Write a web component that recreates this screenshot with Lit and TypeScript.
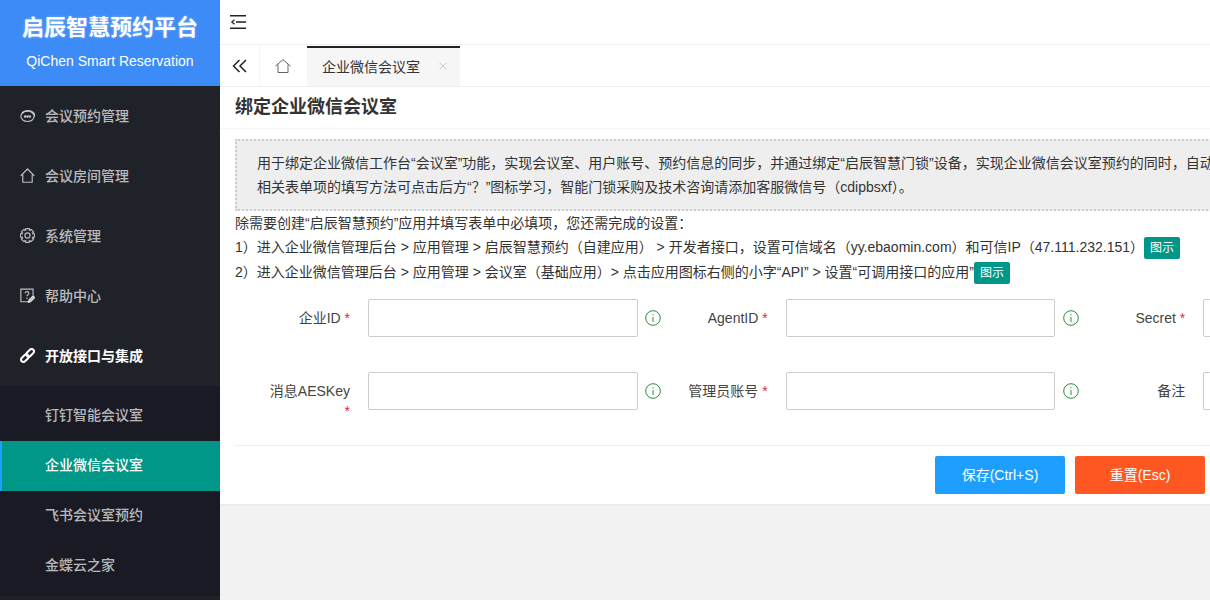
import { LitElement, html, css, svg } from "lit";
import { customElement } from "lit/decorators.js";

const gearPath = (() => {
  const c = 7;
  const pts: string[] = [];
  for (let i = 0; i < 8; i++) {
    const a = (i * Math.PI) / 4;
    for (const [r, d] of [[5.3, -0.42], [6.6, -0.24], [6.6, 0.24], [5.3, 0.42]] as const) {
      const x = c + r * Math.cos(a + d);
      const y = c + r * Math.sin(a + d);
      pts.push(`${x.toFixed(2)} ${y.toFixed(2)}`);
    }
  }
  return `M${pts.join("L")}Z`;
})();

const icons: Record<string, unknown> = {
  chat: svg`<ellipse cx="7" cy="7.8" rx="6.2" ry="4.8"/><path d="M2 4.6C4.2 1.6 11 1.4 13.4 5.4c.5 1 .4 1.8.1 2.6"/><circle cx="4.8" cy="8" r=".6" fill="currentColor"/><circle cx="7" cy="8" r=".6" fill="currentColor"/><circle cx="9.2" cy="8" r=".6" fill="currentColor"/>`,
  home: svg`<path d="M.6 7.4 7 .9l6.4 6.5M2.6 6v7.3h8.8V6"/>`,
  gear: svg`<path d=${gearPath}/><circle cx="7" cy="7" r="2.4"/>`,
  help: svg`<path d="M9 12.8H.8V1h11.4v5.8"/><path d="M4.7 4.9c.2-2.1 3.6-2.1 3.6 0 0 1.3-1.8 1.4-1.8 2.9M6.5 9.2v1"/><path d="m7.8 13.4.5-2.2 3.9-3.9 1.6 1.6-3.9 3.9z" fill="currentColor"/>`,
};

@customElement("app-root")
export class AppRoot extends LitElement {
  static styles = css`
    :host {
      display: block;
      width: 1210px;
      height: 600px;
      overflow: hidden;
      background: #f2f2f2;
      font-family: "Liberation Sans", "Noto Sans CJK SC", sans-serif;
      font-size: 14px;
      color: #333;
    }
    .app { display: flex; height: 600px; width: 1210px; overflow: hidden; }
    .side { flex: 0 0 220px; width: 220px; background: #20222a; color: rgba(255,255,255,.7); }
    .logo {
      height: 86px; background: #3d8bf6; color: #fff; text-align: center;
      display: flex; flex-direction: column; align-items: center; box-sizing: border-box; padding-top: 13px;
    }
    .logo b { font-size: 22px; line-height: 30px; font-weight: 700; text-shadow: 0 0 3px rgba(255,255,255,.35); }
    .logo span { font-size: 14px; line-height: 20px; margin-top: 8px; }
    .nav { display: flex; align-items: center; height: 60px; box-sizing: border-box; padding: 0 0 1px 20px; gap: 10px; font-weight: 500; }
    .nav span { line-height: 18px; }
    .nav svg { width: 15px; height: 15px; flex: none; fill: none; stroke: currentColor; stroke-width: 1.1; }
    .nav.open { color: #fff; font-weight: 700; }
    .nav.open svg { stroke-width: 1.9; }
    .sub { background: #191a23; padding: 5px 0; }
    .sub div { height: 50px; line-height: 48px; padding-left: 45px; font-weight: 500; }
    .sub .on { background: #009688; color: #fff; box-shadow: inset 2px 0 0 #1e9fff; }
    .main { flex: 1; min-width: 0; overflow: hidden; display: flex; flex-direction: column; }
    .top { height: 44px; background: #fff; border-bottom: 1px solid #f0f0f0; flex: none; display: flex; align-items: center; padding-left: 10px; }
    .top svg { width: 16px; height: 14px; }
    .tabs { background: #fff; flex: none; display: flex; border-bottom: 1px solid #eee; height: 41px; }
    .tabs .b { display: flex; align-items: center; justify-content: center; border-right: 1px solid #f6f6f6; box-sizing: border-box; }
    .b1 { width: 40px; }
    .b2 { width: 47px; border-right: none !important; padding-right: 2px; }
    .tab {
      width: 153px; box-sizing: border-box; background: #f6f6f6; border-top: 2px solid #20222a; margin-top: 1px;
      padding: 0 13px 3px 15px; display: flex; align-items: center; justify-content: space-between; color: #333;
    }
    .card { background: #fff; width: 1283px; height: 417px; flex: none; box-shadow: 0 1px 2px rgba(0,0,0,.05); }
    .title { height: 42px; box-sizing: border-box; border-bottom: 1px solid #f6f6f6; padding-left: 15px; font-size: 18px; line-height: 40px; font-weight: 700; color: #333; }
    .body { padding: 10px 15px 0; }
    .notice {
      width: 1253px; height: 72px; box-sizing: border-box; background: #eee; border: 2px dotted #ccc; padding: 10px 0 0 20px;
      line-height: 24px; white-space: nowrap; color: #333;
    }
    .help { white-space: nowrap; line-height: 24px; }
    .help div { height: 24px; }
    .help div + div + div { margin-top: 1px; }
    .tag { display: inline-block; background: #009688; color: #fff; font-size: 12px; line-height: 22px; height: 22px; width: 36px; text-align: center; border-radius: 2px; vertical-align: top; margin-top: 2px; }
    .form { display: grid; grid-template-columns: repeat(3, 417.67px); grid-auto-rows: 38px; row-gap: 35px; margin-top: 15px; }
    .f { display: flex; }
    .f label { width: 115px; flex: none; text-align: right; line-height: 38px; height: 38px; color: #444; }
    .f label.wrap { line-height: 20px; padding-top: 9px; height: auto; }
    .f label em { font-style: normal; color: #d9283f; }
    .in { flex: none; width: 269.5px; height: 38px; box-sizing: border-box; border: 1px solid #ccc; border-radius: 2px; background: #fff; margin-left: 18px; }
    .info { width: 16px; height: 16px; margin: 11px 0 0 7.5px; flex: none; fill: none; stroke: #2e8b3f; stroke-width: 1; }
    .foot { margin-top: 35px; border-top: 1px solid #eee; display: flex; gap: 10px; padding: 10px 0 0 700px; }
    .btn { width: 130px; height: 38px; line-height: 38px; text-align: center; color: #fff; border-radius: 2px; }
    .save { background: #1e9fff; }
    .reset { background: #ff5722; }
  `;

  private field(label: string, req: boolean, info: boolean, wrap = false) {
    return html`<div class="f">
      <label class=${wrap ? "wrap" : ""}>${label}${wrap ? html`<br />` : " "}${req ? html`<em>*</em>` : ""}</label>
      <div class="in"></div>
      ${info
        ? html`<svg class="info" viewBox="0 0 16 16"><circle cx="8" cy="8" r="7.3"/><path d="M8 7v5M8 4.2v1.2"/></svg>`
        : ""}
    </div>`;
  }

  render() {
    return html`<div class="app">
      <aside class="side">
        <div class="logo"><b>启辰智慧预约平台</b><span>QiChen Smart Reservation</span></div>
        <div class="nav"><svg viewBox="0 0 14 14">${icons.chat}</svg><span>会议预约管理</span></div>
        <div class="nav"><svg viewBox="0 0 14 14">${icons.home}</svg><span>会议房间管理</span></div>
        <div class="nav"><svg viewBox="0 0 14 14">${icons.gear}</svg><span>系统管理</span></div>
        <div class="nav"><svg viewBox="0 0 14 14">${icons.help}</svg><span>帮助中心</span></div>
        <div class="nav open"><svg viewBox="0 0 14 14"><rect x="5.4" y="2.3" width="8.2" height="4.4" rx="2.2" transform="rotate(-45 9.5 4.5)"/><rect x=".4" y="7.3" width="8.2" height="4.4" rx="2.2" transform="rotate(-45 4.5 9.5)"/></svg><span>开放接口与集成</span></div>
        <div class="sub">
          <div>钉钉智能会议室</div>
          <div class="on">企业微信会议室</div>
          <div>飞书会议室预约</div>
          <div>金蝶云之家</div>
        </div>
      </aside>
      <main class="main">
        <div class="top">
          <svg viewBox="0 0 16 14" fill="none" stroke="#222" stroke-width="1.6"><path d="M0 .8h16M6 7h10M0 13.2h16"/><path d="M4.5 4.8 1.8 7l2.7 2.2" stroke-width="1.2"/></svg>
        </div>
        <div class="tabs">
          <div class="b b1"><svg width="16" height="14" viewBox="0 0 16 14" fill="none" stroke="#222" stroke-width="1.5"><path d="M7.5 1 1.5 7l6 6M14 1 8 7l6 6"/></svg></div>
          <div class="b b2"><svg width="16" height="14" viewBox="0 0 16 14" fill="none" stroke="#666" stroke-width="1"><path d="M.4 7.2 8 .6l7.6 6.6M3 5.4v8.1h10V5.4"/></svg></div>
          <div class="tab">企业微信会议室<svg width="8" height="8" viewBox="0 0 8 8" stroke="#ccc" stroke-width="1"><path d="m.5.5 7 7M7.5.5l-7 7"/></svg></div>
        </div>
        <section class="card">
          <div class="title">绑定企业微信会议室</div>
          <div class="body">
            <div class="notice">
              用于绑定企业微信工作台“会议室”功能，实现会议室、用户账号、预约信息的同步，并通过绑定“启辰智慧门锁”设备，实现企业微信会议室预约的同时，自动<br />
              相关表单项的填写方法可点击后方“？”图标学习，智能门锁采购及技术咨询请添加客服微信号（cdipbsxf）。
            </div>
            <div class="help">
              <div>除需要创建“启辰智慧预约”应用并填写表单中必填项，您还需完成的设置：</div>
              <div>1）进入企业微信管理后台 &gt; 应用管理 &gt; 启辰智慧预约（自建应用） &gt; 开发者接口，设置可信域名（yy.ebaomin.com）和可信IP（47.111.232.151）<span class="tag">图示</span></div>
              <div>2）进入企业微信管理后台 &gt; 应用管理 &gt; 会议室（基础应用）&gt; 点击应用图标右侧的小字“API” &gt; 设置“可调用接口的应用”<span class="tag">图示</span></div>
            </div>
            <div class="form">
              ${this.field("企业ID", true, true)}
              ${this.field("AgentID", true, true)}
              ${this.field("Secret", true, false)}
              ${this.field("消息AESKey", true, true, true)}
              ${this.field("管理员账号", true, true)}
              ${this.field("备注", false, false)}
            </div>
            <div class="foot">
              <div class="btn save">保存(Ctrl+S)</div>
              <div class="btn reset">重置(Esc)</div>
            </div>
          </div>
        </section>
      </main>
    </div>`;
  }
}
